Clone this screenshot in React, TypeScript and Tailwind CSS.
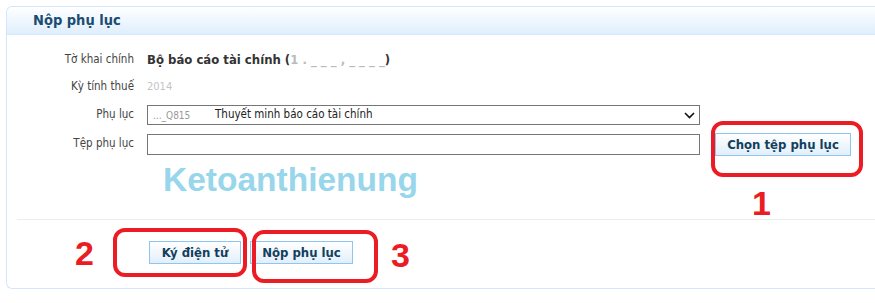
import React from 'react';

const font = { fontFamily: '"DejaVu Sans Condensed", "DejaVu Sans", "Noto Sans", sans-serif' };
const arial = { fontFamily: '"Liberation Sans", Arial, sans-serif' };

const Btn: React.FC<{ label: string; className?: string }> = ({ label, className }) => (
  <button
    className={`h-[23px] border border-[#8ec6f1] bg-gradient-to-b from-white to-[#e1effb] text-[13px] font-bold text-[#123f5c] leading-none ${className ?? ''}`}
  >
    {label}
  </button>
);

const Row: React.FC<{ label: string; h: string; children: React.ReactNode }> = ({ label, h, children }) => (
  <div className={`flex items-center ${h}`}>
    <div className="w-[127px] text-right text-[11.5px] text-[#444]">{label}</div>
    <div className="ml-[13px] flex flex-1 items-center">{children}</div>
  </div>
);

export default function App() {
  return (
    <div className="relative h-[303px] w-[875px] overflow-hidden bg-white" style={font}>
      <div className="ml-[6px] mt-[6px] h-[283px] rounded-l-[6px] border border-r-0 border-[#d3e7fb] flex flex-col">
        <div className="h-[28px] shrink-0 rounded-tl-[6px] border-b border-[#d6e9fc] bg-gradient-to-b from-white to-[#dfeefd] pl-[26px] flex items-center">
          <h2 className="text-[14.5px] font-bold text-[#1b4d71]">Nộp phụ lục</h2>
        </div>

        <div className="pt-[12px]">
          <Row label="Tờ khai chính" h="h-[26px]">
            <span className="text-[13px] font-bold text-[#333]">
              Bộ báo cáo tài chính (<span className="text-[#bbb]">1 . _ _ _ , _ _ _ _</span>)
            </span>
          </Row>
          <Row label="Kỳ tính thuế" h="h-[28px]">
            <span className="text-[11px] text-[#c4c4c4]">2014</span>
          </Row>
          <Row label="Phụ lục" h="h-[28px]">
            <div className="flex h-[20px] w-[553px] items-center border border-[#767676] pl-[5px] pr-[4px] text-[11.5px] text-[#222]">
              <span className="w-[62px] shrink-0 whitespace-nowrap text-[10px] text-[#999]">..._Q815</span>
              <span className="whitespace-nowrap">Thuyết minh báo cáo tài chính</span>
              <svg className="ml-auto shrink-0" width="11" height="7" viewBox="0 0 11 7">
                <path d="M1 1 L5.5 5.5 L10 1" fill="none" stroke="#111" strokeWidth="1.6" />
              </svg>
            </div>
          </Row>
          <Row label="Tệp phụ lục" h="h-[30px]">
            <div className="h-[21px] w-[553px] border border-[#767676]" />
            <Btn label="Chọn tệp phụ lục" className="ml-[15px] w-[136px]" />
          </Row>
        </div>

        <div className="ml-[156px] mt-[1px] text-[33.5px] font-bold leading-[40px] text-[#97d6eb]" style={arial}>
          Ketoanthienung
        </div>

        <div className="ml-[10px] mt-[19px] border-t border-[#ececec]" />

        <div className="ml-[142px] mt-[21px] flex gap-[9px]">
          <Btn label="Ký điện tử" className="w-[92px]" />
          <Btn label="Nộp phụ lục" className="w-[103px]" />
        </div>
      </div>

      {/* red annotations */}
      <div className="absolute left-[711px] top-[121px] h-[56px] w-[152px] rounded-[12px] border-[4px] border-[#ec1c24]" />
      <div className="absolute left-[113px] top-[228px] h-[49px] w-[134px] rounded-[12px] border-[4px] border-[#ec1c24]" />
      <div className="absolute left-[252px] top-[230px] h-[53px] w-[126px] rounded-[12px] border-[4px] border-[#ec1c24]" />
      <div className="absolute left-[752px] top-[183px] text-[34px] font-bold leading-[40px] text-[#ec1c24]" style={arial}>1</div>
      <div className="absolute left-[75px] top-[233px] text-[34px] font-bold leading-[40px] text-[#ec1c24]" style={arial}>2</div>
      <div className="absolute left-[391px] top-[235px] text-[34px] font-bold leading-[40px] text-[#ec1c24]" style={arial}>3</div>
    </div>
  );
}
